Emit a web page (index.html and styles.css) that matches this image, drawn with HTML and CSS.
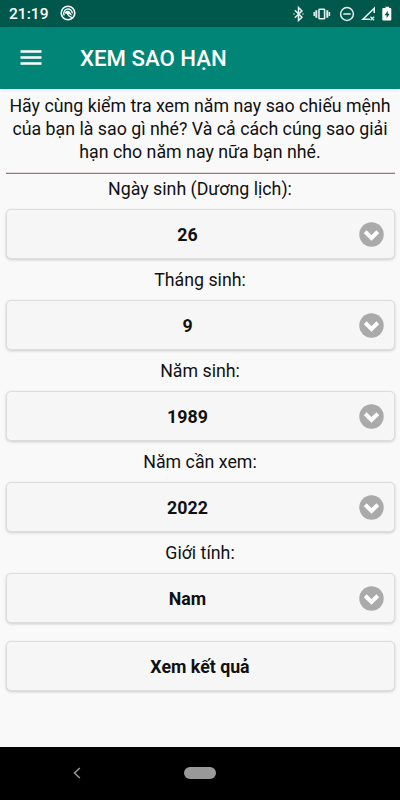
FILE: index.html
```html
<!DOCTYPE html>
<html lang="vi">
<head>
<meta charset="utf-8">
<title>Xem sao hạn</title>
<link rel="stylesheet" href="styles.css">
</head>
<body>
<div class="status">
  <span class="time">21:19</span>
  <svg class="app-icon" width="16" height="16" viewBox="0 0 16 16" fill="none" stroke="#fff"><circle cx="8" cy="8" r="6.8" stroke-width="1.6"/><path d="M4.3 10.5A4.3 4.3 0 1 1 12.3 8.5" stroke-width="1.3"/><path d="M4.6 8.6C5 5.4 8.8 5 10.3 7.4L12.2 10.8 9.4 9.3 7.4 10.2 6.7 8.8Z" fill="#fff" stroke="none"/><path d="M8 10.2l4 2.6" stroke-width="1.2"/></svg>
  <svg class="system" width="104" height="18" viewBox="0 0 104 18" fill="none" stroke="#e4efed">
    <path d="M2.8 5.3l7.2 7L6.5 15.5V2.5L10 5.9 2.8 12.7" stroke-width="1.5"/>
    <path d="M1.5 9h1M10.5 9h1" stroke-width="1.5"/>
    <rect x="27" y="4.2" width="5.6" height="9.6" rx=".5" stroke-width="1.6"/>
    <path d="M24.3 5.2v7.6M35.3 5.2v7.6" stroke-width="2"/>
    <path d="M22.2 7v4M37.4 7v4" stroke-width="1.5"/>
    <circle cx="55" cy="9" r="6.4" stroke-width="1.5"/><path d="M51.3 9h7.4" stroke-width="1.5"/>
    <path d="M82.2 8V3.3L71 14.3h7" stroke-width="1.6"/><path d="M78.5 11.7l3.6 3.6M82.1 11.7l-3.6 3.6" stroke-width="1.3"/>
    <path d="M91.3 3h2.2V1.8h3.6V3h1.2q1 0 1 1v10.5q0 1-1 1h-7q-1 0-1-1V4q0-1 1-1z" fill="#fff" stroke="none"/><path d="M95.8 5.7l-3.2 4.5h2v3l3.1-4.5h-1.9z" fill="#00574b" stroke="none"/>
  </svg>
</div>
<header class="bar">
  <svg width="22" height="16" viewBox="0 0 22 16" stroke="#fff" stroke-width="2.4"><path d="M.5 1.5h21M.5 7.5h21M.5 13.5h21"/></svg>
  <h1>XEM SAO HẠN</h1>
</header>
<main>
  <p class="intro">Hãy cùng kiểm tra xem năm nay sao chiếu mệnh<br>của bạn là sao gì nhé? Và cả cách cúng sao giải<br>hạn cho năm nay nữa bạn nhé.</p>
  <div class="rule"></div>
  <div class="field"><div class="label">Ngày sinh (Dương lịch):</div><div class="box select"><span>26</span><svg class="arrow" width="25" height="25" viewBox="0 0 25 25"><circle cx="12.5" cy="12.5" r="12.2"/><path d="M6.2 9.7l6.3 6.2 6.3-6.2"/></svg></div></div>
  <div class="field"><div class="label">Tháng sinh:</div><div class="box select"><span>9</span><svg class="arrow" width="25" height="25" viewBox="0 0 25 25"><circle cx="12.5" cy="12.5" r="12.2"/><path d="M6.2 9.7l6.3 6.2 6.3-6.2"/></svg></div></div>
  <div class="field"><div class="label">Năm sinh:</div><div class="box select"><span>1989</span><svg class="arrow" width="25" height="25" viewBox="0 0 25 25"><circle cx="12.5" cy="12.5" r="12.2"/><path d="M6.2 9.7l6.3 6.2 6.3-6.2"/></svg></div></div>
  <div class="field"><div class="label">Năm cần xem:</div><div class="box select"><span>2022</span><svg class="arrow" width="25" height="25" viewBox="0 0 25 25"><circle cx="12.5" cy="12.5" r="12.2"/><path d="M6.2 9.7l6.3 6.2 6.3-6.2"/></svg></div></div>
  <div class="field"><div class="label">Giới tính:</div><div class="box select"><span>Nam</span><svg class="arrow" width="25" height="25" viewBox="0 0 25 25"><circle cx="12.5" cy="12.5" r="12.2"/><path d="M6.2 9.7l6.3 6.2 6.3-6.2"/></svg></div></div>
  <div class="box submit"><span>Xem kết quả</span></div>
</main>
<footer class="nav">
  <svg width="8" height="12" viewBox="0 0 8 12" fill="none" stroke="#999" stroke-width="1.5"><path d="M6.8 1L1.5 6l5.3 5"/></svg>
  <div class="pill"></div>
</footer>
</body>
</html>
```
FILE: styles.css
```css
* { box-sizing: border-box; }
body {
  margin: 0;
  width: 400px;
  height: 800px;
  overflow: hidden;
  display: flex;
  flex-direction: column;
  background: #f9f9f9;
  color: #111;
  font-family: Roboto, sans-serif;
  font-size: 17.78px;
}
.status {
  height: 27px;
  background: #00574b;
  color: #fff;
  display: flex;
  align-items: center;
  padding: 0 4px 0 9px;
}
.time { font-size: 15.5px; font-weight: 500; width: 51px; letter-spacing: .05px; }
.app-icon { margin-top: -1px; }
.system { margin-left: auto; }
.bar {
  height: 62px;
  background: #008577;
  color: #fff;
  display: flex;
  align-items: center;
  padding-left: 20px;
  gap: 38px;
  box-shadow: 0 1px 3px rgba(0, 0, 0, .1);
}
.bar h1 { margin: 0; font-size: 22.2px; font-weight: 500; white-space: nowrap; }
main { flex: 1; padding: 6px 5.5px 0; }
.intro { margin: 0; line-height: 23px; text-align: center; white-space: nowrap; }
.rule {
  height: 2px;
  margin: 8px 0 3px .5px;
  border-top: 1px solid #e0d8d8;
  background: #957a7a;
}
.field { height: 91px; }
.label { height: 32px; line-height: 24px; text-align: center; }
.box {
  height: 50px;
  border: 1px solid #ddd;
  border-radius: 5px;
  background: #f6f6f6;
  box-shadow: 0 1px 3px rgba(0, 0, 0, .18);
  display: flex;
  align-items: center;
  font-weight: 700;
}
.box span { flex: 1; text-align: center; padding-top: 1px; }
.select { padding: 0 10.5px 0 18px; }
.select span { padding-right: 8px; }
.arrow { margin-right: -.5px; }
.arrow circle { fill: #aaa; }
.arrow path { fill: none; stroke: #fff; stroke-width: 4; }
.submit { margin-top: 9px; }
.nav {
  height: 53px;
  background: #000;
  display: flex;
  align-items: center;
  padding: 0 0 1px 73px;
}
.pill { width: 32px; height: 12px; margin-left: 103px; border-radius: 6px; background: #999; }
```
